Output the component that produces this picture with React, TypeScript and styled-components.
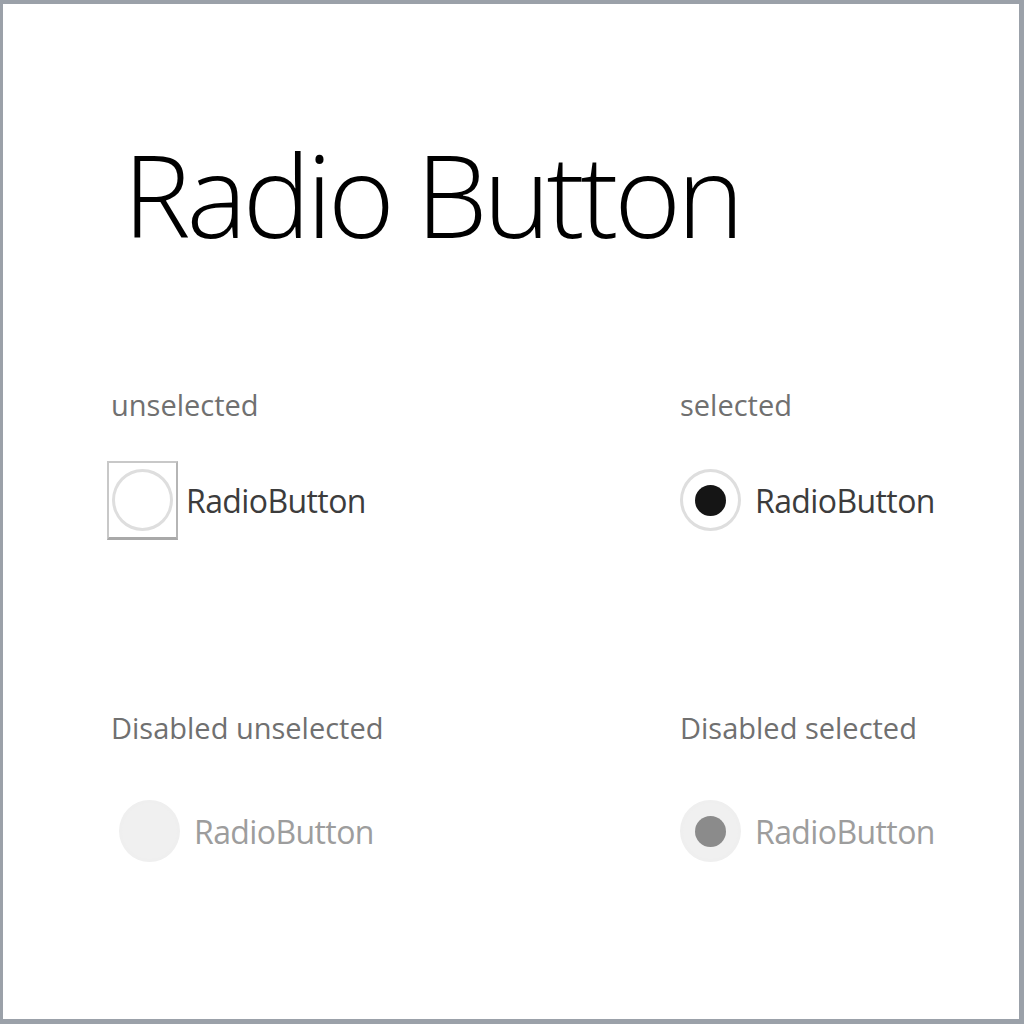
import React from "react";
import styled, { createGlobalStyle } from "styled-components";

const GlobalStyle = createGlobalStyle`
  html, body { margin: 0; padding: 0; background: #ffffff; }
  * { box-sizing: border-box; }
`;

const Frame = styled.div`
  width: 1024px;
  height: 1024px;
  background: #ffffff;
  border-style: solid;
  border-color: #9ba1a9;
  border-width: 4px 5px 5px 3px;
  padding: 125px 0 0 108px;
  font-family: "Open Sans", "Noto Sans", sans-serif;
`;

const Title = styled.h1`
  margin: 0 0 0 12px;
  font-family: "Open Sans", "Noto Sans", sans-serif;
  font-weight: 300;
  font-size: 114px;
  line-height: 130px;
  color: #000000;
  letter-spacing: -4.2px;
`;

const Grid = styled.div`
  display: grid;
  grid-template-columns: 569px 1fr;
  row-gap: 172px;
  margin-top: 129px;
`;

const Cell = styled.div<{ $gap: number }>`
  display: flex;
  flex-direction: column;
  gap: ${(p) => p.$gap}px;
`;

const Label = styled.div`
  font-size: 29px;
  line-height: 34px;
  color: #707070;
  letter-spacing: 0;
`;

const Option = styled.label<{ $focused?: boolean }>`
  display: flex;
  align-items: center;
  gap: ${(p) => (p.$focused ? "8px" : "14px")};
  height: 78px;
`;

const FocusBox = styled.span`
  display: flex;
  align-items: center;
  justify-content: center;
  width: 71px;
  height: 79px;
  margin-left: -4px;
  border: 2px solid #c8c8c8;
  border-bottom: 3px solid #a9a9a9;
  border-right-color: #b5b5b5;
`;

const Circle = styled.span<{ $disabled?: boolean; $checked?: boolean }>`
  display: inline-flex;
  align-items: center;
  justify-content: center;
  width: 61px;
  height: 62px;
  border-radius: 50%;
  flex: none;
  margin-left: ${(p) => (p.$disabled && !p.$checked ? "8px" : "0")};
  background: ${(p) => (p.$disabled ? "#f0f0f0" : "#ffffff")};
  border: 3px solid ${(p) => (p.$disabled ? "#efefef" : "#dedede")};
`;

const Dot = styled.span<{ $disabled?: boolean }>`
  width: 31px;
  height: 31px;
  border-radius: 50%;
  background: ${(p) => (p.$disabled ? "#8b8b8b" : "#151515")};
`;

const OptionText = styled.span<{ $disabled?: boolean }>`
  font-size: 32px;
  letter-spacing: -0.6px;
  color: ${(p) => (p.$disabled ? "#9d9d9d" : "#3c3c3c")};
`;

const Radio: React.FC<{ checked?: boolean; disabled?: boolean; focused?: boolean }> = ({
  checked,
  disabled,
  focused,
}) => {
  const circle = (
    <Circle $disabled={disabled} $checked={checked}>
      {checked && <Dot $disabled={disabled} />}
    </Circle>
  );
  return (
    <Option $focused={focused}>
      {focused ? <FocusBox>{circle}</FocusBox> : circle}
      <OptionText $disabled={disabled}>RadioButton</OptionText>
    </Option>
  );
};

export default function App() {
  return (
    <>
      <GlobalStyle />
      <Frame>
        <Title>Radio Button</Title>
        <Grid>
          <Cell $gap={39}>
            <Label>unselected</Label>
            <Radio focused />
          </Cell>
          <Cell $gap={39}>
            <Label>selected</Label>
            <Radio checked />
          </Cell>
          <Cell $gap={47}>
            <Label>Disabled unselected</Label>
            <Radio disabled />
          </Cell>
          <Cell $gap={47}>
            <Label>Disabled selected</Label>
            <Radio checked disabled />
          </Cell>
        </Grid>
      </Frame>
    </>
  );
}
